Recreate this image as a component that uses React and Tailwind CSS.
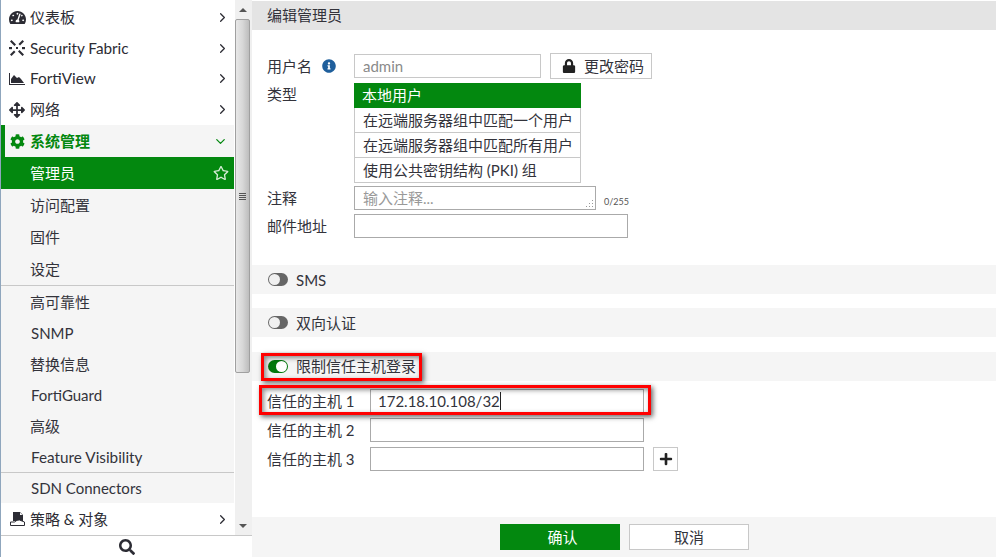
import { ChevronRight, ChevronDown } from 'lucide-react'
import { FaTachometerAlt, FaArrowsAlt, FaCog, FaSearch, FaLock, FaInfoCircle, FaRegStar, FaPlus } from 'react-icons/fa'

const GREEN = 'bg-[#03880f]'
const BOX_SHADOW = 'shadow-[2px_2px_5px_rgba(0,0,0,0.6),inset_2px_2px_5px_rgba(0,0,0,0.45)]'

function FabricIcon() {
  return (
    <svg width="16" height="16" viewBox="0 0 16 16" fill="#2c2c34">
      <path d="M1 1.500 2.500 0 7 4.500 5.500 6zM15 1.500 13.500 0 9.500 4 11 5.500zM1 14.500 2.500 16 6.500 12 5 10.500zM15 14.500 13.500 16 9 11.500 10.500 10z" />
      <rect x="0" y="7" width="3" height="2.200" />
      <rect x="13" y="7" width="3" height="2.200" />
      <rect x="7" y="7" width="2" height="2" />
    </svg>
  )
}

function ChartIcon() {
  return (
    <svg width="16" height="16" viewBox="0 0 16 16" fill="#2c2c34">
      <path d="M0 2h1v11h15v1H0z" />
      <path d="M2 12V8l3-4 3 3 2-1 2 2 3 4v0z" />
    </svg>
  )
}

function PolicyIcon() {
  return (
    <svg width="15" height="14" viewBox="0 0 15 14">
      <path d="M3 0H10L13 3V9H3Z" fill="#2c2c34" />
      <path d="M10 0.500 12.500 3H10Z" fill="#fff" />
      <path d="M0.500 13.500V10H4.500Q7 7.500 9.500 8L14.500 10V13.500Z" fill="#fff" stroke="#2c2c34" />
    </svg>
  )
}

function NavRow({ icon, label, h = 'h-[31px]', size = 'text-[15px]' }) {
  return (
    <div className={`flex ${h} items-center bg-white pl-2 pr-1`}>
      <span className="flex w-4 justify-center">{icon}</span>
      <span className={`ml-[5px] flex-1 text-[#2c2c34] ${size}`}>{label}</span>
      <ChevronRight size={15} strokeWidth={2} className="text-[#2c2c34]" />
    </div>
  )
}

function SubRow({ label, h = 'h-[31px]', pl = 'pl-[29px]', size = 'text-[15px]' }) {
  return <div className={`flex ${h} items-center ${pl} ${size} text-[#33333b]`}>{label}</div>
}

function Scrollbar() {
  return (
    <div className="flex w-[17px] flex-col items-start bg-[#f0f0f0]">
      <div className="flex h-[19px] w-[15px] items-center justify-center">
        <div className="h-0 w-0 border-x-[4px] border-b-[4px] border-x-transparent border-b-[#555]" />
      </div>
      <div className="flex h-[354px] w-[15px] flex-col items-center justify-center rounded-[2px] border border-[#a0a0a0] bg-gradient-to-r from-[#e8e8e8] via-[#d8d8d8] to-[#bdbdbd]">
        <div className="flex flex-col gap-[1px]">
          <div className="h-[1px] w-[7px] bg-[#555]" />
          <div className="h-[1px] w-[7px] bg-[#555]" />
          <div className="h-[1px] w-[7px] bg-[#555]" />
          <div className="h-[1px] w-[7px] bg-[#555]" />
        </div>
      </div>
      <div className="flex-1" />
      <div className="flex h-[19px] w-[15px] items-center justify-center">
        <div className="h-0 w-0 border-x-[4px] border-t-[4px] border-x-transparent border-t-[#555]" />
      </div>
    </div>
  )
}

function Sidebar() {
  return (
    <div className="flex h-full w-[252px] shrink-0 flex-col border-l border-[#8fa6bd]">
      <div className="flex min-h-0 flex-1">
        <div className="w-[233px] shrink-0 bg-[#f5f5f5]">
          <div className="h-[1px] bg-white" />
          <NavRow icon={<FaTachometerAlt size={17} color="#2c2c34" className="shrink-0" />} label="仪表板" h="h-[32px]" />
          <NavRow icon={<FabricIcon />} label="Security Fabric" h="h-[30px]" size="text-[15.3px]" />
          <NavRow icon={<ChartIcon />} label="FortiView" size="text-[15.3px]" />
          <NavRow icon={<FaArrowsAlt size={16} color="#2c2c34" />} label="网络" />
          <div className="flex h-[32px] items-center border-l-4 border-[#03880f] pl-1 pr-[6px] font-bold text-[#03880f]">
            <span className="flex w-4 justify-center"><FaCog size={15} /></span>
            <span className="ml-[5px] flex-1 text-[15px]">系统管理</span>
            <ChevronDown size={15} strokeWidth={2} />
          </div>
          <div className={`flex h-[32px] items-center ${GREEN} pl-[29px] pr-[5px] text-[15px] text-white`}>
            <span className="flex-1">管理员</span>
            <FaRegStar size={16} className="text-[#d5ecd5]" />
          </div>
          <SubRow label="访问配置" h="h-[32px]" />
          <SubRow label="固件" h="h-[32px]" />
          <SubRow label="设定" h="h-[32px]" />
          <div className="h-[1px] bg-[#c8c8c8]" />
          <SubRow label="高可靠性" h="h-[32px]" />
          <SubRow label="SNMP" pl="pl-[30px]" />
          <SubRow label="替换信息" />
          <SubRow label="FortiGuard" pl="pl-[30px]" />
          <SubRow label="高级" />
          <SubRow label="Feature Visibility" h="h-[30px]" pl="pl-[30px]" size="text-[15.3px]" />
          <div className="h-[1px] bg-[#c8c8c8]" />
          <SubRow label="SDN Connectors" h="h-[30px]" pl="pl-[30px]" />
          <NavRow icon={<PolicyIcon />} label="策略 & 对象" h="h-[32px]" />
        </div>
        <div className="w-[1px] bg-white" />
        <Scrollbar />
      </div>
      <div className="flex h-[22px] shrink-0 items-center justify-center border-t border-[#c8c8c8] bg-white pt-[1px]">
        <FaSearch size={16} color="#2c2c34" />
      </div>
    </div>
  )
}

function Label({ children, className = '' }) {
  return <div className={`text-[15px] text-[#33333b] ${className}`}>{children}</div>
}

function TypeOption({ label, active }) {
  return (
    <div className={`flex h-[25px] items-center pl-2 text-[15px] ${active ? `${GREEN} text-white` : 'border-x border-b border-[#c8c8c8] text-[#33333b]'}`}>
      {label}
    </div>
  )
}

function Band({ on, label, className = '', labelClass = '' }) {
  return (
    <div className={`flex h-[29px] items-center bg-[#f5f5f5] pl-4 text-[15px] text-[#33333b] ${className}`}>
      {on ? (
        <span className="flex h-[13px] w-[20px] items-center justify-end rounded-full bg-[#03780d] pr-[1px]">
          <span className="h-[11px] w-[11px] rounded-full bg-white" />
        </span>
      ) : (
        <span className="flex h-[13px] w-[20px] items-center rounded-full bg-[#666] pl-[1px]">
          <span className="h-[11px] w-[11px] rounded-full bg-[#f0f0f0]" />
        </span>
      )}
      <span className={`ml-[8px] ${labelClass}`}>{label}</span>
    </div>
  )
}

function HostRow({ n, value, children, className = '' }) {
  return (
    <div className={`flex h-[24px] items-center ${className}`}>
      <Label className="w-[103px]">信任的主机 {n}</Label>
      <div className="flex h-[24px] w-[274px] items-center border border-[#aaa] bg-white pl-[7px] text-[15px] text-[#33333b]">
        {value}
        {value && <span className="h-[18px] w-[1px] bg-[#222]" />}
      </div>
      {children}
    </div>
  )
}

function Main() {
  return (
    <div className="flex h-full min-w-0 flex-1 flex-col bg-white">
      <div className="mt-[1px] flex h-[29px] shrink-0 items-center bg-[#e4e4e4] pl-[15px] text-[15px] text-[#33333b]">编辑管理员</div>
      <div className="relative min-h-0 flex-1">
        <div className="pl-[15px] pt-[23px]">
          <div className="flex h-[26px] items-center">
            <Label className="w-[55px]">用户名</Label>
            <FaInfoCircle size={14} className="text-[#1f5f9c]" />
            <div className="ml-[18px] flex h-[24px] w-[187px] items-center border border-[#c8c8c8] pl-2 text-[15px] text-[#8a8a8a]">admin</div>
            <div className="ml-[9px] flex h-[26px] w-[102px] items-center border border-[#c8c8c8] pl-[11px] text-[15px] text-[#33333b]">
              <FaLock size={14} color="#222" />
              <span className="ml-[8px]">更改密码</span>
            </div>
          </div>
          <div className="mt-[4px] flex">
            <Label className="w-[87px]">类型</Label>
            <div className="w-[227px]">
              <TypeOption label="本地用户" active />
              <TypeOption label="在远端服务器组中匹配一个用户" />
              <TypeOption label="在远端服务器组中匹配所有用户" />
              <TypeOption label="使用公共密钥结构 (PKI) 组" />
            </div>
          </div>
          <div className="mt-[3px] flex h-[24px] items-center">
            <Label className="w-[87px]">注释</Label>
            <div className="flex h-[24px] w-[242px] items-center border border-[#aaa] pl-2 text-[15px] text-[#999]">
              输入注释...
              <svg width="8" height="8" viewBox="0 0 8 8" fill="#999" className="ml-auto mr-[1px] mt-[12px]">
                <rect x="6" y="0" width="1" height="1" />
                <rect x="3" y="3" width="1" height="1" />
                <rect x="6" y="3" width="1" height="1" />
                <rect x="0" y="6" width="1" height="1" />
                <rect x="3" y="6" width="1" height="1" />
                <rect x="6" y="6" width="1" height="1" />
              </svg>
            </div>
            <span className="ml-2 mt-[7px] text-[9px] text-[#555]">0/255</span>
          </div>
          <div className="mt-[4px] flex h-[24px] items-center">
            <Label className="w-[87px]">邮件地址</Label>
            <div className="h-[24px] w-[274px] border border-[#aaa]" />
          </div>
        </div>
        <Band label="SMS" className="mt-[27px]" labelClass="pt-[2px]" />
        <Band label="双向认证" className="mt-[14px]" labelClass="pt-[2px]" />
        <Band on label="限制信任主机登录" className="mt-[15px]" />
        <div className="pl-[15px] pt-[8px]">
          <HostRow n={1} value="172.18.10.108/32" />
          <HostRow n={2} className="mt-[5px]" />
          <HostRow n={3} className="mt-[5px]">
            <div className="ml-[9px] flex h-[24px] w-[25px] items-center justify-center border border-[#c8c8c8]">
              <FaPlus size={14} color="#222" />
            </div>
          </HostRow>
        </div>
        <div className={`pointer-events-none absolute left-[9px] top-[323px] h-[28px] w-[161px] border-[3px] border-[#f00] ${BOX_SHADOW}`} />
        <div className={`pointer-events-none absolute left-[7px] top-[355px] h-[30px] w-[392px] border-[3px] border-[#f00] ${BOX_SHADOW}`} />
      </div>
      <div className="flex h-[40px] shrink-0 items-center justify-center gap-[9px] bg-[#f5f5f5] pl-[1px] text-[15px]">
        <div className={`flex h-[26px] w-[120px] items-center justify-center ${GREEN} pl-[5px] pt-[1px] text-white`}>确认</div>
        <div className="flex h-[26px] w-[120px] items-center justify-center border border-[#c8c8c8] bg-white pt-[1px] text-[#33333b]">取消</div>
      </div>
    </div>
  )
}

export default function App() {
  return (
    <div className="flex h-[557px] w-[996px] overflow-hidden bg-white font-['Lato','Noto_Sans_CJK_SC',sans-serif]">
      <Sidebar />
      <Main />
    </div>
  )
}
